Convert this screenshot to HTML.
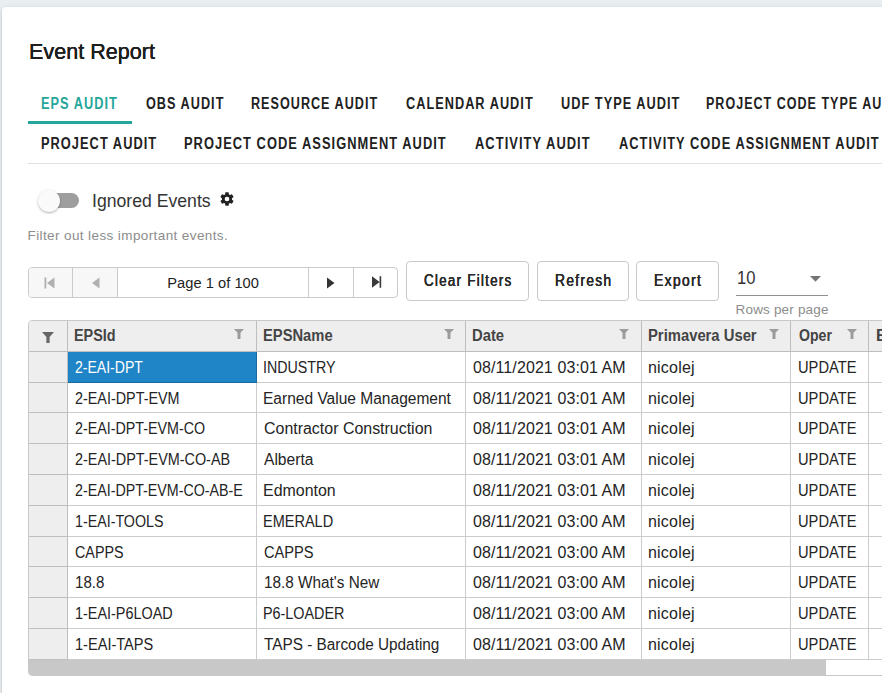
<!DOCTYPE html>
<html><head><meta charset="utf-8"><title>Event Report</title>
<style>
html,body{margin:0;padding:0;overflow:hidden}
body{width:882px;height:693px;overflow:hidden;background:#e9eef1;font-family:"Liberation Sans",sans-serif;position:relative}
.card{position:absolute;left:2px;top:7px;width:1200px;height:900px;background:#fff;border-radius:4px;
 box-shadow:0 3px 1px -2px rgba(0,0,0,.2),0 2px 2px 0 rgba(0,0,0,.14),0 1px 5px 0 rgba(0,0,0,.12)}
.t{position:absolute;white-space:nowrap;display:block;transform-origin:0 0}
.abs{position:absolute}
.ic{position:absolute;display:block}
.hc,.c,.rh{position:absolute;box-sizing:border-box;border-right:1px solid rgba(0,0,0,.2);border-bottom:1px solid rgba(0,0,0,.2)}
.hc,.rh{background:#eee}
.c{background:#fff}
.sel{background:#1f85c7}
.btn{position:absolute;box-sizing:border-box;border:1px solid #c9c9c9;border-radius:4px;background:#fff}
</style></head><body>
<div class="card"></div>
<!-- tabs -->
<div class="abs" style="left:28px;top:121px;width:104px;height:3px;background:#26a69a"></div>
<div class="abs" style="left:28px;top:163px;width:900px;height:1px;background:#e0e0e0"></div>
<!-- switch -->
<div class="abs" style="left:39.5px;top:193px;width:39.6px;height:15px;border-radius:7.5px;background:#9e9e9e"></div>
<div class="abs" style="left:38px;top:190px;width:22px;height:22px;border-radius:50%;background:#fafafa;box-shadow:0 1px 3px 0 rgba(0,0,0,.22),0 1px 1px 0 rgba(0,0,0,.10)"></div>
<!-- gear -->
<svg class="ic" style="left:219.4px;top:191.3px" width="16" height="16" viewBox="0 0 24 24"><path fill="#222" d="M12 15.5A3.5 3.5 0 0 1 8.5 12 3.5 3.5 0 0 1 12 8.500a3.5 3.5 0 0 1 3.5 3.5 3.500 3.500 0 0 1-3.500 3.500m7.430-2.530c.04-.32.070-.64.070-.97 0-.33-.030-.660-.070-1l2.110-1.630c.190-.15.240-.42.120-.64l-2-3.460c-.12-.22-.39-.31-.61-.22l-2.490 1c-.52-.39-1.060-.73-1.690-.98l-.37-2.650A.506.506 0 0 0 14 2h-4c-.25 0-.46.180-.5.420l-.37 2.650c-.63.250-1.170.590-1.690.98l-2.490-1c-.22-.090-.49 0-.61.220l-2 3.460c-.13.220-.07.490.12.640L4.570 11c-.4.340-.7.670-.07 1 0 .33.030.65.070.97l-2.110 1.660c-.19.150-.25.420-.12.640l2 3.460c.12.220.39.300.61.220l2.490-1.010c.52.400 1.060.74 1.690.99l.37 2.650c.4.240.25.420.5.420h4c.25 0 .46-.18.500-.42l.37-2.650c.63-.26 1.170-.59 1.690-.99l2.490 1.010c.22.080.49 0 .61-.22l2-3.460c.12-.22.070-.49-.12-.64l-2.110-1.660Z"/></svg>
<!-- pager -->
<div class="abs" style="left:28px;top:267px;width:370px;height:31px;box-sizing:border-box;border:1px solid #cbcbcb;border-radius:4px;background:#fff;overflow:hidden">
 <div class="abs" style="left:0;top:0;width:43px;height:29px;background:#f7f7f7;border-right:1px solid #cbcbcb"></div>
 <div class="abs" style="left:44px;top:0;width:44px;height:29px;background:#f7f7f7;border-right:1px solid #cbcbcb"></div>
 <div class="abs" style="left:279px;top:0;width:1px;height:29px;background:#cbcbcb"></div>
 <div class="abs" style="left:324px;top:0;width:1px;height:29px;background:#cbcbcb"></div>
</div>
<svg class="ic" style="left:43.5px;top:277px" width="11" height="12" viewBox="0 0 11 12"><path fill="#b0b0b0" d="M0.500 0.500H2.300V11.500H0.500ZM10.500 0.500V11.500L3 6Z"/></svg>
<svg class="ic" style="left:92px;top:277px" width="8" height="12" viewBox="0 0 8 12"><path fill="#b0b0b0" d="M7.500 0.500V11.500L0 6Z"/></svg>
<svg class="ic" style="left:327px;top:277px" width="8" height="12" viewBox="0 0 8 12"><path fill="#333" d="M0 0.500V11.500L7.500 6Z"/></svg>
<svg class="ic" style="left:372px;top:276px" width="11" height="12" viewBox="0 0 11 12"><path fill="#3a3a3a" d="M7.600 0.200H9.200V11.800H7.600ZM0 0.200V11.800L7.600 6Z"/></svg>
<!-- buttons -->
<div class="btn" style="left:406px;top:261px;width:123px;height:40px"></div>
<div class="btn" style="left:537px;top:261px;width:92px;height:40px"></div>
<div class="btn" style="left:636px;top:261px;width:83px;height:40px"></div>
<!-- select -->
<div class="abs" style="left:736px;top:295px;width:92px;height:1px;background:#8f8f8f"></div>
<svg class="ic" style="left:810px;top:276px" width="11" height="6" viewBox="0 0 11 6"><path fill="#757575" d="M0 0H11L5.500 5.800Z"/></svg>
<!-- grid -->
<div class="abs" style="left:28px;top:320px;width:900px;height:356px;box-sizing:border-box;border:1px solid #c8c8c8;border-radius:4px 0 0 4px;background:#fff;overflow:hidden">
<div class="hc" style="left:0px;top:0.0px;width:39px;height:30.8px"></div>
<div class="hc" style="left:39px;top:0.0px;width:189px;height:30.8px"></div>
<div class="hc" style="left:228px;top:0.0px;width:209px;height:30.8px"></div>
<div class="hc" style="left:437px;top:0.0px;width:176px;height:30.8px"></div>
<div class="hc" style="left:613px;top:0.0px;width:149px;height:30.8px"></div>
<div class="hc" style="left:762px;top:0.0px;width:78px;height:30.8px"></div>
<div class="hc" style="left:840px;top:0.0px;width:132px;height:30.8px"></div>
<div class="rh" style="left:0px;top:30.8px;width:39px;height:30.8px"></div>
<div class="c sel" style="left:39px;top:30.8px;width:189px;height:30.8px"></div>
<div class="c" style="left:228px;top:30.8px;width:209px;height:30.8px"></div>
<div class="c" style="left:437px;top:30.8px;width:176px;height:30.8px"></div>
<div class="c" style="left:613px;top:30.8px;width:149px;height:30.8px"></div>
<div class="c" style="left:762px;top:30.8px;width:78px;height:30.8px"></div>
<div class="c" style="left:840px;top:30.8px;width:132px;height:30.8px"></div>
<div class="rh" style="left:0px;top:61.6px;width:39px;height:30.8px"></div>
<div class="c" style="left:39px;top:61.6px;width:189px;height:30.8px"></div>
<div class="c" style="left:228px;top:61.6px;width:209px;height:30.8px"></div>
<div class="c" style="left:437px;top:61.6px;width:176px;height:30.8px"></div>
<div class="c" style="left:613px;top:61.6px;width:149px;height:30.8px"></div>
<div class="c" style="left:762px;top:61.6px;width:78px;height:30.8px"></div>
<div class="c" style="left:840px;top:61.6px;width:132px;height:30.8px"></div>
<div class="rh" style="left:0px;top:92.4px;width:39px;height:30.8px"></div>
<div class="c" style="left:39px;top:92.4px;width:189px;height:30.8px"></div>
<div class="c" style="left:228px;top:92.4px;width:209px;height:30.8px"></div>
<div class="c" style="left:437px;top:92.4px;width:176px;height:30.8px"></div>
<div class="c" style="left:613px;top:92.4px;width:149px;height:30.8px"></div>
<div class="c" style="left:762px;top:92.4px;width:78px;height:30.8px"></div>
<div class="c" style="left:840px;top:92.4px;width:132px;height:30.8px"></div>
<div class="rh" style="left:0px;top:123.2px;width:39px;height:30.8px"></div>
<div class="c" style="left:39px;top:123.2px;width:189px;height:30.8px"></div>
<div class="c" style="left:228px;top:123.2px;width:209px;height:30.8px"></div>
<div class="c" style="left:437px;top:123.2px;width:176px;height:30.8px"></div>
<div class="c" style="left:613px;top:123.2px;width:149px;height:30.8px"></div>
<div class="c" style="left:762px;top:123.2px;width:78px;height:30.8px"></div>
<div class="c" style="left:840px;top:123.2px;width:132px;height:30.8px"></div>
<div class="rh" style="left:0px;top:154.0px;width:39px;height:30.8px"></div>
<div class="c" style="left:39px;top:154.0px;width:189px;height:30.8px"></div>
<div class="c" style="left:228px;top:154.0px;width:209px;height:30.8px"></div>
<div class="c" style="left:437px;top:154.0px;width:176px;height:30.8px"></div>
<div class="c" style="left:613px;top:154.0px;width:149px;height:30.8px"></div>
<div class="c" style="left:762px;top:154.0px;width:78px;height:30.8px"></div>
<div class="c" style="left:840px;top:154.0px;width:132px;height:30.8px"></div>
<div class="rh" style="left:0px;top:184.8px;width:39px;height:30.8px"></div>
<div class="c" style="left:39px;top:184.8px;width:189px;height:30.8px"></div>
<div class="c" style="left:228px;top:184.8px;width:209px;height:30.8px"></div>
<div class="c" style="left:437px;top:184.8px;width:176px;height:30.8px"></div>
<div class="c" style="left:613px;top:184.8px;width:149px;height:30.8px"></div>
<div class="c" style="left:762px;top:184.8px;width:78px;height:30.8px"></div>
<div class="c" style="left:840px;top:184.8px;width:132px;height:30.8px"></div>
<div class="rh" style="left:0px;top:215.6px;width:39px;height:30.8px"></div>
<div class="c" style="left:39px;top:215.6px;width:189px;height:30.8px"></div>
<div class="c" style="left:228px;top:215.6px;width:209px;height:30.8px"></div>
<div class="c" style="left:437px;top:215.6px;width:176px;height:30.8px"></div>
<div class="c" style="left:613px;top:215.6px;width:149px;height:30.8px"></div>
<div class="c" style="left:762px;top:215.6px;width:78px;height:30.8px"></div>
<div class="c" style="left:840px;top:215.6px;width:132px;height:30.8px"></div>
<div class="rh" style="left:0px;top:246.4px;width:39px;height:30.8px"></div>
<div class="c" style="left:39px;top:246.4px;width:189px;height:30.8px"></div>
<div class="c" style="left:228px;top:246.4px;width:209px;height:30.8px"></div>
<div class="c" style="left:437px;top:246.4px;width:176px;height:30.8px"></div>
<div class="c" style="left:613px;top:246.4px;width:149px;height:30.8px"></div>
<div class="c" style="left:762px;top:246.4px;width:78px;height:30.8px"></div>
<div class="c" style="left:840px;top:246.4px;width:132px;height:30.8px"></div>
<div class="rh" style="left:0px;top:277.2px;width:39px;height:30.8px"></div>
<div class="c" style="left:39px;top:277.2px;width:189px;height:30.8px"></div>
<div class="c" style="left:228px;top:277.2px;width:209px;height:30.8px"></div>
<div class="c" style="left:437px;top:277.2px;width:176px;height:30.8px"></div>
<div class="c" style="left:613px;top:277.2px;width:149px;height:30.8px"></div>
<div class="c" style="left:762px;top:277.2px;width:78px;height:30.8px"></div>
<div class="c" style="left:840px;top:277.2px;width:132px;height:30.8px"></div>
<div class="rh" style="left:0px;top:308.0px;width:39px;height:30.8px"></div>
<div class="c" style="left:39px;top:308.0px;width:189px;height:30.8px"></div>
<div class="c" style="left:228px;top:308.0px;width:209px;height:30.8px"></div>
<div class="c" style="left:437px;top:308.0px;width:176px;height:30.8px"></div>
<div class="c" style="left:613px;top:308.0px;width:149px;height:30.8px"></div>
<div class="c" style="left:762px;top:308.0px;width:78px;height:30.8px"></div>
<div class="c" style="left:840px;top:308.0px;width:132px;height:30.8px"></div>
<div class="abs" style="left:0;top:339px;width:797px;height:15px;background:#c8c8c8"></div>
</div>
<svg class="ic" style="left:42px;top:332px" width="12" height="11" viewBox="0 0 12 11"><path fill="#666" d="M0 0H12L7.6 4.95V11H4.4V4.95Z"/></svg>
<svg class="ic" style="left:233.8px;top:329px" width="10" height="10" viewBox="0 0 10 10"><path fill="#9c9c9c" d="M0 0H10L6.5 3.8V10H3.5V3.8Z"/></svg>
<svg class="ic" style="left:443.55px;top:329px" width="10" height="10" viewBox="0 0 10 10"><path fill="#9c9c9c" d="M0 0H10L6.5 3.8V10H3.5V3.8Z"/></svg>
<svg class="ic" style="left:619.3px;top:329px" width="10" height="10" viewBox="0 0 10 10"><path fill="#9c9c9c" d="M0 0H10L6.5 3.8V10H3.5V3.8Z"/></svg>
<svg class="ic" style="left:768.8px;top:329px" width="10" height="10" viewBox="0 0 10 10"><path fill="#9c9c9c" d="M0 0H10L6.5 3.8V10H3.5V3.8Z"/></svg>
<svg class="ic" style="left:846.8px;top:329px" width="10" height="10" viewBox="0 0 10 10"><path fill="#9c9c9c" d="M0 0H10L6.5 3.8V10H3.5V3.8Z"/></svg>
<span class="t" style="left:29.05px;top:38.60px;font-size:21.5px;line-height:26px;font-weight:400;color:#1e1e1e;letter-spacing:0.035px;text-shadow:0.05px 0 0 #1e1e1e,-0.05px 0 0 #1e1e1e">Event Report</span>
<span class="t" style="left:41.30px;top:93.80px;font-size:16px;line-height:19px;font-weight:700;color:#26a69a;letter-spacing:1.300px;transform:scaleX(0.7971)">EPS AUDIT</span>
<span class="t" style="left:145.50px;top:93.80px;font-size:16px;line-height:19px;font-weight:700;color:#212121;letter-spacing:1.300px;transform:scaleX(0.7909)">OBS AUDIT</span>
<span class="t" style="left:250.71px;top:93.80px;font-size:16px;line-height:19px;font-weight:700;color:#212121;letter-spacing:1.300px;transform:scaleX(0.7868)">RESOURCE AUDIT</span>
<span class="t" style="left:405.70px;top:93.80px;font-size:16px;line-height:19px;font-weight:700;color:#212121;letter-spacing:1.300px;transform:scaleX(0.7945)">CALENDAR AUDIT</span>
<span class="t" style="left:560.50px;top:93.80px;font-size:16px;line-height:19px;font-weight:700;color:#212121;letter-spacing:1.300px;transform:scaleX(0.7956)">UDF TYPE AUDIT</span>
<span class="t" style="left:706.22px;top:93.80px;font-size:16px;line-height:19px;font-weight:700;color:#212121;letter-spacing:1.300px;transform:scaleX(0.7823)">PROJECT CODE TYPE AUDIT</span>
<span class="t" style="left:41.20px;top:133.80px;font-size:16px;line-height:19px;font-weight:700;color:#212121;letter-spacing:1.300px;transform:scaleX(0.8001)">PROJECT AUDIT</span>
<span class="t" style="left:184.20px;top:133.80px;font-size:16px;line-height:19px;font-weight:700;color:#212121;letter-spacing:1.300px;transform:scaleX(0.8029)">PROJECT CODE ASSIGNMENT AUDIT</span>
<span class="t" style="left:475.00px;top:133.80px;font-size:16px;line-height:19px;font-weight:700;color:#212121;letter-spacing:1.300px;transform:scaleX(0.8057)">ACTIVITY AUDIT</span>
<span class="t" style="left:619.00px;top:133.80px;font-size:16px;line-height:19px;font-weight:700;color:#212121;letter-spacing:1.300px;transform:scaleX(0.8008)">ACTIVITY CODE ASSIGNMENT AUDIT</span>
<span class="t" style="left:91.65px;top:189.50px;font-size:18.5px;line-height:22px;font-weight:400;color:#333;transform:scaleX(0.9530)">Ignored Events</span>
<span class="t" style="left:27.50px;top:228.00px;font-size:13.5px;line-height:16px;font-weight:400;color:#8c8c8c;letter-spacing:0.396px">Filter out less important events.</span>
<span class="t" style="left:167.25px;top:274.25px;font-size:14.67px;line-height:18px;font-weight:400;color:#222;letter-spacing:0.032px">Page 1 of 100</span>
<span class="t" style="left:423.88px;top:271.25px;font-size:16px;line-height:19px;font-weight:400;color:#2a2a2a;letter-spacing:1.500px;text-shadow:0.15px 0 0 #2a2a2a,-0.15px 0 0 #2a2a2a;transform:scaleX(0.8370)">Clear Filters</span>
<span class="t" style="left:555.02px;top:271.25px;font-size:16px;line-height:19px;font-weight:400;color:#2a2a2a;letter-spacing:1.500px;text-shadow:0.15px 0 0 #2a2a2a,-0.15px 0 0 #2a2a2a;transform:scaleX(0.8632)">Refresh</span>
<span class="t" style="left:653.76px;top:271.25px;font-size:16px;line-height:19px;font-weight:400;color:#2a2a2a;letter-spacing:1.500px;text-shadow:0.15px 0 0 #2a2a2a,-0.15px 0 0 #2a2a2a;transform:scaleX(0.8723)">Export</span>
<span class="t" style="left:736.58px;top:267.00px;font-size:18px;line-height:22px;font-weight:400;color:#333;transform:scaleX(0.9205)">10</span>
<span class="t" style="left:735.50px;top:301.70px;font-size:13.5px;line-height:16px;font-weight:400;color:#8c8c8c;letter-spacing:0.184px">Rows per page</span>
<span class="t" style="left:74.35px;top:325.75px;font-size:16px;line-height:19px;font-weight:700;color:#444;transform:scaleX(0.8997)">EPSId</span>
<span class="t" style="left:262.83px;top:325.75px;font-size:16px;line-height:19px;font-weight:700;color:#444;transform:scaleX(0.9204)">EPSName</span>
<span class="t" style="left:472.07px;top:325.75px;font-size:16px;line-height:19px;font-weight:700;color:#444;transform:scaleX(0.9251)">Date</span>
<span class="t" style="left:648.07px;top:325.75px;font-size:16px;line-height:19px;font-weight:700;color:#444;transform:scaleX(0.9252)">Primavera User</span>
<span class="t" style="left:798.75px;top:325.75px;font-size:16px;line-height:19px;font-weight:700;color:#444;transform:scaleX(0.8823)">Oper</span>
<span class="t" style="left:876.00px;top:325.75px;font-size:16px;line-height:19px;font-weight:700;color:#444">E</span>
<span class="t" style="left:75.00px;top:358.00px;font-size:16px;line-height:19px;font-weight:400;color:#fff;transform:scaleX(0.8766)">2-EAI-DPT</span>
<span class="t" style="left:262.86px;top:358.00px;font-size:16px;line-height:19px;font-weight:400;color:#242424;transform:scaleX(0.8909)">INDUSTRY</span>
<span class="t" style="left:473.00px;top:358.00px;font-size:16px;line-height:19px;font-weight:400;color:#242424;letter-spacing:0.098px">08/11/2021 03:01 AM</span>
<span class="t" style="left:648.00px;top:358.00px;font-size:16px;line-height:19px;font-weight:400;color:#242424;letter-spacing:0.199px">nicolej</span>
<span class="t" style="left:797.58px;top:358.00px;font-size:16px;line-height:19px;font-weight:400;color:#242424;transform:scaleX(0.9172)">UPDATE</span>
<span class="t" style="left:75.00px;top:389.00px;font-size:16px;line-height:19px;font-weight:400;color:#242424;transform:scaleX(0.8977)">2-EAI-DPT-EVM</span>
<span class="t" style="left:262.78px;top:389.00px;font-size:16px;line-height:19px;font-weight:400;color:#242424;transform:scaleX(0.9707)">Earned Value Management</span>
<span class="t" style="left:473.00px;top:389.00px;font-size:16px;line-height:19px;font-weight:400;color:#242424;letter-spacing:0.098px">08/11/2021 03:01 AM</span>
<span class="t" style="left:648.00px;top:389.00px;font-size:16px;line-height:19px;font-weight:400;color:#242424;letter-spacing:0.199px">nicolej</span>
<span class="t" style="left:797.58px;top:389.00px;font-size:16px;line-height:19px;font-weight:400;color:#242424;transform:scaleX(0.9172)">UPDATE</span>
<span class="t" style="left:75.00px;top:419.00px;font-size:16px;line-height:19px;font-weight:400;color:#242424;transform:scaleX(0.8927)">2-EAI-DPT-EVM-CO</span>
<span class="t" style="left:263.75px;top:419.00px;font-size:16px;line-height:19px;font-weight:400;color:#242424;transform:scaleX(0.9967)">Contractor Construction</span>
<span class="t" style="left:473.00px;top:419.00px;font-size:16px;line-height:19px;font-weight:400;color:#242424;letter-spacing:0.098px">08/11/2021 03:01 AM</span>
<span class="t" style="left:648.00px;top:419.00px;font-size:16px;line-height:19px;font-weight:400;color:#242424;letter-spacing:0.199px">nicolej</span>
<span class="t" style="left:797.58px;top:419.00px;font-size:16px;line-height:19px;font-weight:400;color:#242424;transform:scaleX(0.9172)">UPDATE</span>
<span class="t" style="left:75.00px;top:450.00px;font-size:16px;line-height:19px;font-weight:400;color:#242424;transform:scaleX(0.8994)">2-EAI-DPT-EVM-CO-AB</span>
<span class="t" style="left:263.75px;top:450.00px;font-size:16px;line-height:19px;font-weight:400;color:#242424;transform:scaleX(0.9745)">Alberta</span>
<span class="t" style="left:473.00px;top:450.00px;font-size:16px;line-height:19px;font-weight:400;color:#242424;letter-spacing:0.098px">08/11/2021 03:01 AM</span>
<span class="t" style="left:648.00px;top:450.00px;font-size:16px;line-height:19px;font-weight:400;color:#242424;letter-spacing:0.199px">nicolej</span>
<span class="t" style="left:797.58px;top:450.00px;font-size:16px;line-height:19px;font-weight:400;color:#242424;transform:scaleX(0.9172)">UPDATE</span>
<span class="t" style="left:75.00px;top:481.00px;font-size:16px;line-height:19px;font-weight:400;color:#242424;transform:scaleX(0.8906)">2-EAI-DPT-EVM-CO-AB-E</span>
<span class="t" style="left:262.75px;top:481.00px;font-size:16px;line-height:19px;font-weight:400;color:#242424;transform:scaleX(0.9959)">Edmonton</span>
<span class="t" style="left:473.00px;top:481.00px;font-size:16px;line-height:19px;font-weight:400;color:#242424;letter-spacing:0.098px">08/11/2021 03:01 AM</span>
<span class="t" style="left:648.00px;top:481.00px;font-size:16px;line-height:19px;font-weight:400;color:#242424;letter-spacing:0.199px">nicolej</span>
<span class="t" style="left:797.58px;top:481.00px;font-size:16px;line-height:19px;font-weight:400;color:#242424;transform:scaleX(0.9172)">UPDATE</span>
<span class="t" style="left:75.36px;top:512.00px;font-size:16px;line-height:19px;font-weight:400;color:#242424;transform:scaleX(0.8912)">1-EAI-TOOLS</span>
<span class="t" style="left:262.84px;top:512.00px;font-size:16px;line-height:19px;font-weight:400;color:#242424;transform:scaleX(0.9070)">EMERALD</span>
<span class="t" style="left:473.00px;top:512.00px;font-size:16px;line-height:19px;font-weight:400;color:#242424;letter-spacing:0.098px">08/11/2021 03:00 AM</span>
<span class="t" style="left:648.00px;top:512.00px;font-size:16px;line-height:19px;font-weight:400;color:#242424;letter-spacing:0.199px">nicolej</span>
<span class="t" style="left:797.58px;top:512.00px;font-size:16px;line-height:19px;font-weight:400;color:#242424;transform:scaleX(0.9172)">UPDATE</span>
<span class="t" style="left:75.00px;top:543.00px;font-size:16px;line-height:19px;font-weight:400;color:#242424;transform:scaleX(0.8960)">CAPPS</span>
<span class="t" style="left:263.50px;top:543.00px;font-size:16px;line-height:19px;font-weight:400;color:#242424;transform:scaleX(0.9147)">CAPPS</span>
<span class="t" style="left:473.00px;top:543.00px;font-size:16px;line-height:19px;font-weight:400;color:#242424;letter-spacing:0.098px">08/11/2021 03:00 AM</span>
<span class="t" style="left:648.00px;top:543.00px;font-size:16px;line-height:19px;font-weight:400;color:#242424;letter-spacing:0.199px">nicolej</span>
<span class="t" style="left:797.58px;top:543.00px;font-size:16px;line-height:19px;font-weight:400;color:#242424;transform:scaleX(0.9172)">UPDATE</span>
<span class="t" style="left:75.06px;top:573.00px;font-size:16px;line-height:19px;font-weight:400;color:#242424;transform:scaleX(0.9424)">18.8</span>
<span class="t" style="left:263.54px;top:573.00px;font-size:16px;line-height:19px;font-weight:400;color:#242424;transform:scaleX(0.9572)">18.8 What's New</span>
<span class="t" style="left:473.00px;top:573.00px;font-size:16px;line-height:19px;font-weight:400;color:#242424;letter-spacing:0.098px">08/11/2021 03:00 AM</span>
<span class="t" style="left:648.00px;top:573.00px;font-size:16px;line-height:19px;font-weight:400;color:#242424;letter-spacing:0.199px">nicolej</span>
<span class="t" style="left:797.58px;top:573.00px;font-size:16px;line-height:19px;font-weight:400;color:#242424;transform:scaleX(0.9172)">UPDATE</span>
<span class="t" style="left:75.35px;top:604.00px;font-size:16px;line-height:19px;font-weight:400;color:#242424;transform:scaleX(0.9001)">1-EAI-P6LOAD</span>
<span class="t" style="left:262.85px;top:604.00px;font-size:16px;line-height:19px;font-weight:400;color:#242424;transform:scaleX(0.8975)">P6-LOADER</span>
<span class="t" style="left:473.00px;top:604.00px;font-size:16px;line-height:19px;font-weight:400;color:#242424;letter-spacing:0.098px">08/11/2021 03:00 AM</span>
<span class="t" style="left:648.00px;top:604.00px;font-size:16px;line-height:19px;font-weight:400;color:#242424;letter-spacing:0.199px">nicolej</span>
<span class="t" style="left:797.58px;top:604.00px;font-size:16px;line-height:19px;font-weight:400;color:#242424;transform:scaleX(0.9172)">UPDATE</span>
<span class="t" style="left:75.34px;top:635.00px;font-size:16px;line-height:19px;font-weight:400;color:#242424;transform:scaleX(0.9107)">1-EAI-TAPS</span>
<span class="t" style="left:263.50px;top:635.00px;font-size:16px;line-height:19px;font-weight:400;color:#242424;transform:scaleX(0.9588)">TAPS - Barcode Updating</span>
<span class="t" style="left:473.00px;top:635.00px;font-size:16px;line-height:19px;font-weight:400;color:#242424;letter-spacing:0.098px">08/11/2021 03:00 AM</span>
<span class="t" style="left:648.00px;top:635.00px;font-size:16px;line-height:19px;font-weight:400;color:#242424;letter-spacing:0.199px">nicolej</span>
<span class="t" style="left:797.58px;top:635.00px;font-size:16px;line-height:19px;font-weight:400;color:#242424;transform:scaleX(0.9172)">UPDATE</span>
</body></html>
